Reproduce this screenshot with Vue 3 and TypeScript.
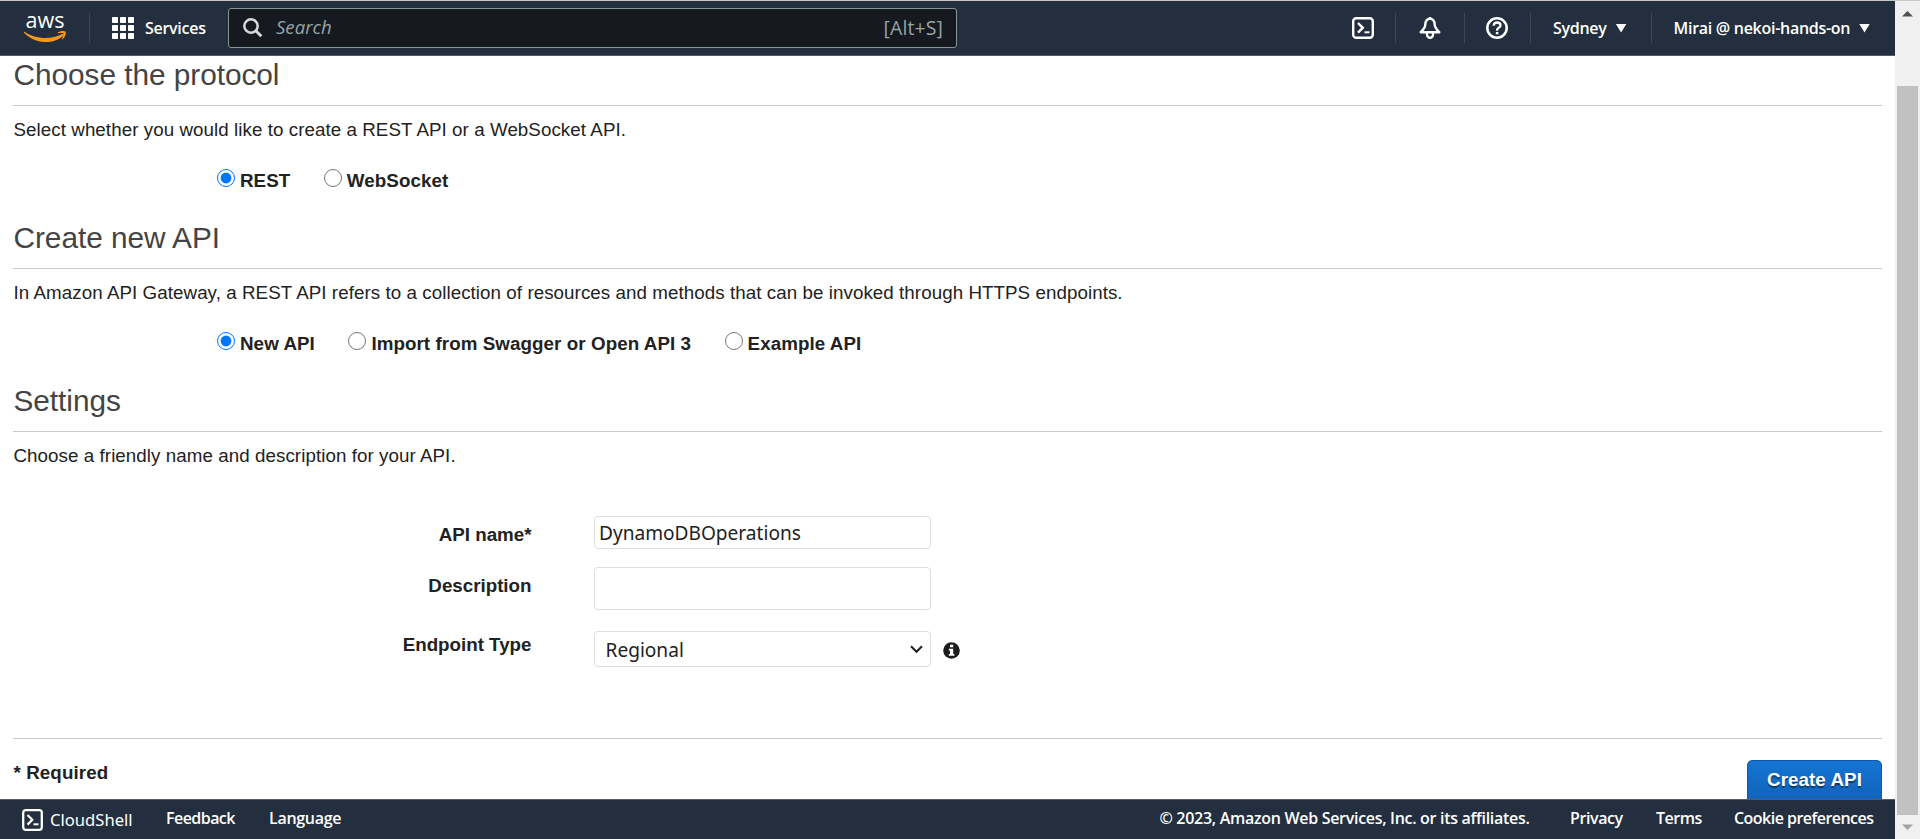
<script setup lang="ts">
import { ref } from 'vue'

interface Choice {
  value: string
  label: string
}

const protocols: Choice[] = [
  { value: 'rest', label: 'REST' },
  { value: 'websocket', label: 'WebSocket' },
]
const sources: Choice[] = [
  { value: 'new', label: 'New API' },
  { value: 'import', label: 'Import from Swagger or Open API 3' },
  { value: 'example', label: 'Example API' },
]

const protocol = ref('rest')
const source = ref('new')
const apiName = ref('DynamoDBOperations')
const description = ref('')
const endpoint = ref('Regional')
</script>

<template>
  <div class="window">
    <div class="page">
      <header class="topbar">
        <svg class="logo" width="44" height="38" viewBox="0 -8 44 38">
          <text x="1.5" y="15" textLength="39" lengthAdjust="spacingAndGlyphs" class="logo-text">aws</text>
          <path d="M0.5 18.800C11 26.300 27 27 38.200 21c1.400-.6 2.200.8 1.100 1.700C29 32 11 31.300 0 19.800c-.5-.6-.1-1.400.5-1z" fill="#f7981d" />
          <path d="M34 19.300c2.500-1.600 6.500-1.800 7.500-.8s-.2 5.500-2.700 7.700c-.5.4-.8.100-.6-.4.700-1.700 1.800-4.400 1.300-5.200-.5-.7-3.200-.5-5-.3-.8.100-1.100-.6-.5-1z" fill="#f7981d" />
        </svg>
        <span class="divider first"></span>
        <svg class="grid-icon" width="22" height="22" viewBox="0 0 22 22" fill="#fff">
          <template v-for="r in 3" :key="r">
            <rect v-for="c in 3" :key="c" :x="(c - 1) * 8" :y="(r - 1) * 8" width="6" height="6" rx="0.8" />
          </template>
        </svg>
        <span class="services">Services</span>
        <div class="search">
          <svg width="20" height="20" viewBox="0 0 20 20" fill="none" stroke="#d5dbdb">
            <circle cx="8" cy="8" r="6.700" stroke-width="2.500" />
            <path d="M12.800 12.800 18.300 18.300" stroke-width="3" />
          </svg>
          <span class="placeholder">Search</span>
          <span class="shortcut">[Alt+S]</span>
        </div>
        <div class="tools">
          <svg class="shell-tool" width="22" height="22" viewBox="0 0 22 22" fill="none" stroke="#fff">
            <rect x="1.200" y="1.200" width="19.600" height="19.600" rx="3" stroke-width="2.400" />
            <path d="M6 6l4.800 4.800L6 15.600" stroke-width="2.400" />
            <path d="M12.500 15.300h5" stroke-width="2" />
          </svg>
          <span class="divider"></span>
          <svg class="bell" width="22" height="22" viewBox="0 0 22 22" fill="none" stroke="#fff" stroke-width="2.400" stroke-linejoin="round">
            <path d="M11 1.400C7.800 2.200 6.300 4.300 6.300 7.500c0 3.300-1.700 4.900-4.600 7.700h18.600c-2.900-2.800-4.600-4.400-4.600-7.700C15.700 4.300 14.200 2.200 11 1.400z" />
            <path d="M8 15.500v2.300a3 3 0 0 0 6 0v-2.300" />
            <path d="M11 0v2" />
          </svg>
          <span class="divider"></span>
          <svg class="help" width="22" height="22" viewBox="0 0 22 22" fill="none" stroke="#fff">
            <circle cx="11" cy="11" r="9.700" stroke-width="2.500" />
            <path d="M7.700 8.700c.1-2.100 1.500-3.200 3.400-3.200s3.400 1.100 3.400 2.900c0 2.300-3.400 2.200-3.400 4.700v.6" stroke-width="2.300" />
            <path d="M11.100 15v2.300" stroke-width="2.500" />
          </svg>
          <span class="divider"></span>
          <span class="menu region">Sydney<i class="caret"></i></span>
          <span class="divider"></span>
          <span class="menu account"><span class="account-name">Mirai @ nekoi-hands-on</span><i class="caret"></i></span>
        </div>
      </header>

      <main class="content">
        <section class="section">
          <h2>Choose the protocol</h2>
          <p>Select whether you would like to create a REST API or a WebSocket API.</p>
          <div class="choices">
            <label v-for="c in protocols" :key="c.value">
              <input v-model="protocol" type="radio" name="protocol" :value="c.value" />{{ c.label }}
            </label>
          </div>
        </section>
        <section class="section">
          <h2>Create new API</h2>
          <p>In Amazon API Gateway, a REST API refers to a collection of resources and methods that can be invoked through HTTPS endpoints.</p>
          <div class="choices">
            <label v-for="c in sources" :key="c.value">
              <input v-model="source" type="radio" name="source" :value="c.value" />{{ c.label }}
            </label>
          </div>
        </section>
        <section class="settings">
          <h2>Settings</h2>
          <p>Choose a friendly name and description for your API.</p>
          <div class="form">
            <label class="name" for="api-name">API name*</label>
            <input id="api-name" v-model="apiName" class="field text" type="text" />
            <label class="desc" for="api-desc">Description</label>
            <textarea id="api-desc" v-model="description" class="field"></textarea>
            <label class="type" for="api-type">Endpoint Type</label>
            <div class="select-row">
              <div id="api-type" class="field select">
                <span class="value">{{ endpoint }}</span>
                <svg width="13" height="9" viewBox="0 0 13 9" fill="none" stroke="#222" stroke-width="2"><path d="M1 1.300l5.500 5.500L12 1.300" /></svg>
              </div>
              <svg class="info" width="17" height="17" viewBox="0 0 17 17">
                <circle cx="8.500" cy="8.500" r="8.300" fill="#1c1c1c" />
                <path d="M7 2.700h3.200v2.600H7zM5.800 6.700h4.400v5.200h1.200v1.900H5.800v-1.900H7V8.600H5.800z" fill="#fff" />
              </svg>
            </div>
          </div>
        </section>
        <div class="actions">
          <span class="required">* Required</span>
          <button class="create" type="button">Create API</button>
        </div>
      </main>

      <footer class="bottombar">
        <svg class="shell" width="21" height="22" viewBox="0 0 21 22" fill="none" stroke="#fff">
          <rect x="1.200" y="1.200" width="18.600" height="19.600" rx="2.500" stroke-width="2.300" />
          <path d="M5.500 6l4.800 4.800-4.800 4.800" stroke-width="2.200" />
          <path d="M11.500 15.300h5" stroke-width="2" />
        </svg>
        <span class="cloudshell">CloudShell</span>
        <span class="feedback">Feedback</span>
        <span class="language">Language</span>
        <span class="copyright">© 2023, Amazon Web Services, Inc. or its affiliates.</span>
        <span class="privacy">Privacy</span>
        <span class="terms">Terms</span>
        <span class="cookies">Cookie preferences</span>
      </footer>
    </div>
    <div class="scrollbar">
      <svg width="11" height="6" viewBox="0 0 11 6"><path d="M5.500 0 11 5.500H0z" fill="#505050" /></svg>
      <div class="thumb"></div>
      <svg width="11" height="6" viewBox="0 0 11 6"><path d="M0 .5h11L5.500 6z" fill="#a3a3a3" /></svg>
    </div>
  </div>
</template>

<style>
body {
  background: #fff;
  overflow: hidden;
}
</style>

<style scoped>
* {
  box-sizing: border-box;
}
.window {
  display: flex;
  width: 1920px;
  height: 839px;
  border-top: 1px solid #c8c8c8;
  font-family: "Liberation Sans", Arial, sans-serif;
  font-size: 18.75px;
  line-height: 23px;
  color: #222;
}
.page {
  display: flex;
  flex-direction: column;
  width: 1895px;
  height: 838px;
}
.topbar {
  display: flex;
  align-items: center;
  flex: 0 0 55px;
  padding-left: 24px;
  background: #232f3e;
  border-bottom: 1px solid #545b64;
  color: #fff;
  font: 600 16px/24px "Open Sans", sans-serif;
  letter-spacing: -0.28px;
}
.logo {
  margin-top: -8px;
}
.logo-text {
  font: 500 21px "Open Sans", sans-serif;
  letter-spacing: 0;
  fill: #fff;
}
.divider {
  width: 1px;
  height: 30px;
  background: #414750;
}
.divider.first {
  margin-left: 21px;
}
.grid-icon {
  margin-left: 22px;
}
.services {
  width: 61px;
  margin: -1px 0 0 11px;
  white-space: nowrap;
}
.search {
  display: flex;
  align-items: center;
  width: 729px;
  height: 40px;
  margin-left: 22px;
  padding: 0 13px 0 14px;
  border: 1px solid #879596;
  border-radius: 3px;
  background: #16191f;
  color: #95a5a6;
  letter-spacing: 0;
}
.placeholder {
  margin: -2px 0 0 13px;
  font-size: 18.6px;
  font-style: italic;
  font-weight: 400;
}
.shortcut {
  margin-left: auto;
  font-size: 19.5px;
  font-weight: 400;
  letter-spacing: 0.1px;
}
.tools {
  display: flex;
  align-items: center;
  margin-left: auto;
  padding-right: 25px;
}
.shell-tool {
  margin-right: 21px;
}
.bell {
  margin: 0 23px;
}
.help {
  margin: 0 22px 0 21px;
}
.menu {
  display: flex;
  align-items: center;
  white-space: nowrap;
}
.caret {
  width: 11px;
  height: 9px;
  background: #fff;
  clip-path: polygon(0 0, 100% 0, 50% 100%);
}
.region {
  width: 119.5px;
  padding-left: 22px;
}
.region .caret {
  margin-left: 9px;
}
.account {
  padding-left: 22px;
}
.account-name {
  width: 177.5px;
}
.account .caret {
  margin-left: 8px;
}
.content {
  flex: 1;
  min-height: 0;
  overflow: hidden;
  padding: 0 13px;
}
.section {
  height: 163px;
}
.settings {
  height: 356px;
}
h2 {
  height: 50px;
  margin: 0;
  padding-left: 0.5px;
  border-bottom: 1px solid #c8c8c8;
  font-size: 29.8px;
  font-weight: 400;
  line-height: 37px;
  letter-spacing: -0.04px;
  color: #444;
}
p {
  margin: 12px 0 0;
  padding-left: 0.5px;
  letter-spacing: 0.065px;
}
.choices {
  display: flex;
  gap: 33.5px;
  margin: 28px 0 0 204px;
  font-weight: 700;
  letter-spacing: 0.08px;
}
.choices label {
  display: flex;
  align-items: flex-start;
}
.choices input {
  width: 18px;
  height: 18px;
  margin: 0 5px 0 0;
}
.form {
  display: grid;
  grid-template-columns: 518.5px 400px;
  column-gap: 62.5px;
  grid-template-rows: 33px 43px 36px;
  row-gap: 18px;
  margin-top: 49px;
}
.form > label {
  font-weight: 700;
  text-align: right;
}
.name,
.desc {
  padding-top: 7px;
}
.type {
  padding-top: 5px;
}
.field {
  display: block;
  width: 337px;
  height: 100%;
  margin: 0;
  padding: 0 5px;
  border: 1px solid #ddd;
  border-radius: 4px;
  outline: none;
  resize: none;
  background: #fff;
  color: #222;
  font: 400 19.1px/24px "Noto Sans", sans-serif;
}
.field.text {
  padding: 1px 4px 0;
}
.select-row {
  display: flex;
  align-items: center;
  height: 36px;
  margin-top: 3px;
}
.field.select {
  display: flex;
  align-items: center;
  justify-content: space-between;
  padding: 0 7px 0 10.5px;
}
.value {
  padding-top: 2px;
}
.info {
  margin: 2px 0 0 12px;
}
.actions {
  display: flex;
  justify-content: space-between;
  align-items: flex-start;
  padding-top: 21px;
  border-top: 1px solid #c8c8c8;
}
.required {
  margin-top: 1px;
  padding-left: 0.5px;
  font-weight: 700;
  letter-spacing: 0.1px;
}
.create {
  width: 135px;
  height: 44px;
  padding: 0 0 5px;
  border: 1px solid #0f5aa8;
  border-radius: 5px;
  background: linear-gradient(#1574d4, #1063b8);
  color: #fff;
  font: 700 18.75px/23px "Liberation Sans", Arial, sans-serif;
  letter-spacing: 0.07px;
  text-shadow: 0 2px 1px rgba(0, 0, 0, 0.45);
}
.bottombar {
  display: flex;
  align-items: center;
  flex: 0 0 40px;
  padding: 0 21px 0 22px;
  border-top: 1px solid #545b64;
  background: #232f3e;
  color: #fff;
  font: 600 16px/24px "Open Sans", sans-serif;
  letter-spacing: -0.3px;
  white-space: nowrap;
}
.bottombar span {
  margin-top: -3px;
}
.bottombar .cloudshell {
  width: 84px;
  margin: 1px 0 0 7px;
  font: 400 16.6px/24px "Noto Sans", sans-serif;
  letter-spacing: 0;
}
.feedback {
  width: 70px;
  margin-left: 32px;
  letter-spacing: -0.55px;
}
.language {
  margin-left: 33px;
}
.copyright {
  width: 370px;
  margin-left: auto;
}
.privacy {
  width: 53px;
  margin-left: 40.5px;
  letter-spacing: -0.4px;
}
.terms {
  width: 45px;
  margin-left: 33px;
  letter-spacing: -0.5px;
}
.cookies {
  width: 140px;
  margin-left: 33px;
  letter-spacing: -0.53px;
}
.scrollbar {
  display: flex;
  flex-direction: column;
  align-items: center;
  justify-content: space-between;
  width: 25px;
  height: 838px;
  padding: 10px 0 9px;
  background: #f0f0f0;
}
.thumb {
  width: 21px;
  height: 729px;
  margin-top: 60px;
  margin-bottom: 1px;
  background: #c1c1c1;
}
</style>
